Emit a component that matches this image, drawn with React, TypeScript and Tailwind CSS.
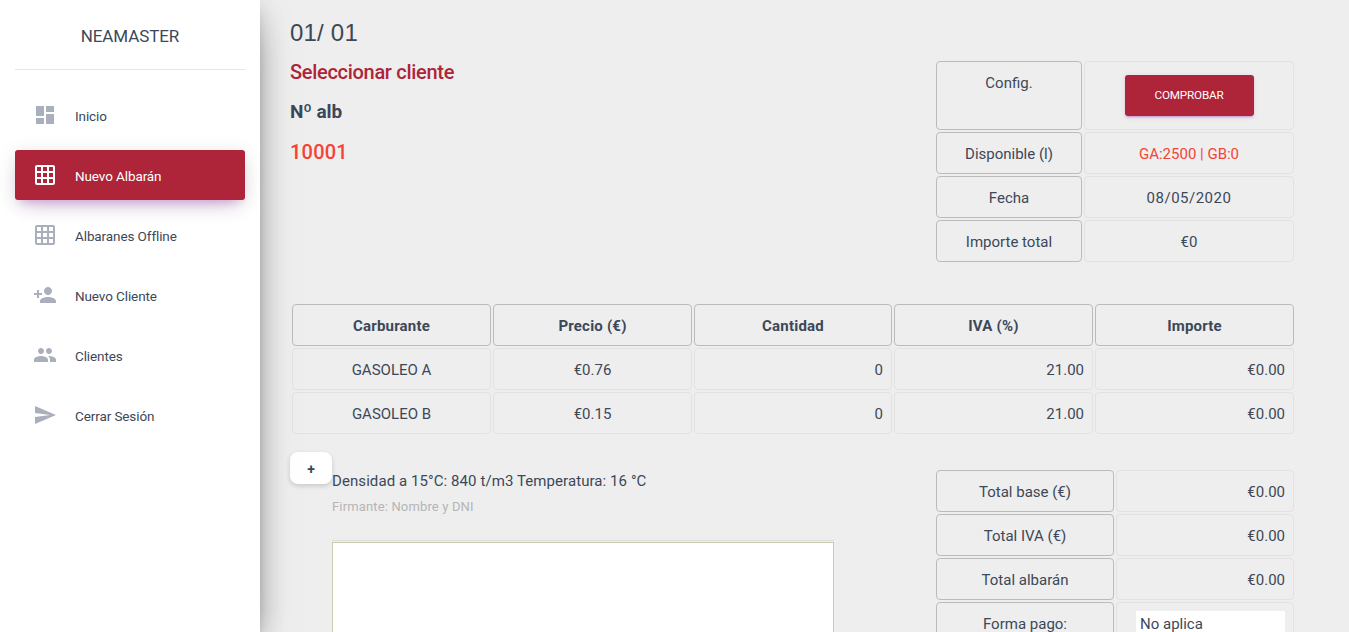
import { MdDashboard, MdGridOn, MdPersonAdd, MdPeople, MdSend } from "react-icons/md";

const font = "font-['Roboto',sans-serif]";

const menu = [
  { label: "Inicio", icon: MdDashboard },
  { label: "Nuevo Albarán", icon: MdGridOn, active: true },
  { label: "Albaranes Offline", icon: MdGridOn },
  { label: "Nuevo Cliente", icon: MdPersonAdd },
  { label: "Clientes", icon: MdPeople },
  { label: "Cerrar Sesión", icon: MdSend },
];

function Cell({
  children,
  head,
  right,
  className = "",
}: {
  children?: React.ReactNode;
  head?: boolean;
  right?: boolean;
  className?: string;
}) {
  return (
    <div
      className={`flex h-[42px] items-center rounded-[4px] border pt-[2px] text-[15px] ${
        head ? "border-[#bbbbbb]" : "border-[#e2e2e2]"
      } ${right ? "justify-end pr-2" : "justify-center"} ${className}`}
    >
      {children}
    </div>
  );
}

function Sidebar() {
  return (
    <aside className="relative z-10 h-full w-[260px] shrink-0 bg-white px-[15px] shadow-[0_16px_38px_-12px_rgba(0,0,0,0.56),0_4px_25px_0_rgba(0,0,0,0.12),0_8px_10px_-5px_rgba(0,0,0,0.2)]">
      <div className="flex h-[70px] items-center justify-center border-b border-[#e5e5e5] pt-[4px] text-[17px] tracking-[-0.1px]">
        NEAMASTER
      </div>
      <nav className="mt-5 flex flex-col gap-[10px]">
        {menu.map((item) => (
          <div
            key={item.label}
            className={`flex h-[50px] items-center rounded-[3px] pl-[18px] text-[13.5px] tracking-[-0.1px] ${
              item.active
                ? "bg-[#ae2438] text-white shadow-[0_12px_20px_-10px_rgba(156,39,176,0.28),0_4px_20px_0_rgba(0,0,0,0.12),0_7px_8px_-5px_rgba(156,39,176,0.2)]"
                : "text-[#3c4858]"
            }`}
          >
            <item.icon className={`mr-[18px] h-6 w-6 ${item.active ? "text-white" : "text-[#a9afbb]"}`} />
            <span className="pt-[2px]">{item.label}</span>
          </div>
        ))}
      </nav>
    </aside>
  );
}

export default function App() {
  return (
    <div className={`flex h-[632px] overflow-hidden bg-[#eeeeee] text-[#3c4858] ${font}`}>
      <Sidebar />
      <main className="min-w-0 flex-1 pl-[30px] pr-[55px] pt-[18px]">
        <div className="flex justify-between">
          <div className="pt-[1px]">
            <div className="font-['Liberation_Sans',sans-serif] text-[24px] leading-[28px] tracking-[0.2px]">01/ 01</div>
            <div className="mt-[11px] text-[20px] font-medium leading-[28px] tracking-[-0.3px] text-[#ae2438]">
              Seleccionar cliente
            </div>
            <div className="mt-[12px] text-[19px] font-bold leading-[28px] tracking-[-0.1px]">Nº alb</div>
            <div className="mt-[12px] text-[20px] font-medium leading-[28px] tracking-[0.2px] text-[#f44336]">10001</div>
          </div>
          <div className="mt-[43px] grid w-[358px] grid-cols-[146px_210px] gap-[2px]">
            <div className="flex h-[69px] justify-center rounded-[4px] border border-[#bbbbbb] pt-[10px] text-[15px]">
              Config.
            </div>
            <div className="flex h-[69px] items-center justify-center rounded-[4px] border border-[#e2e2e2]">
              <button className="flex h-[41px] w-[129px] items-center justify-center rounded-[3px] bg-[#ae2438] text-[11.7px] tracking-[-0.2px] text-white shadow-[0_2px_2px_0_rgba(156,39,176,0.14),0_3px_1px_-2px_rgba(156,39,176,0.2),0_1px_5px_0_rgba(156,39,176,0.12)]">
                COMPROBAR
              </button>
            </div>
            <Cell head>Disponible (l)</Cell>
            <Cell className="text-[#f44336]">GA:2500 | GB:0</Cell>
            <Cell head>Fecha</Cell>
            <Cell className="tracking-[0.5px]">08/05/2020</Cell>
            <Cell head>Importe total</Cell>
            <Cell>€0</Cell>
          </div>
        </div>

        <div className="ml-[2px] mt-[42px] grid grid-cols-[199px_199px_198px_199px_199px] gap-[2px]">
          {["Carburante", "Precio (€)", "Cantidad", "IVA (%)", "Importe"].map((h) => (
            <Cell key={h} head className="font-bold tracking-[0.2px]">
              {h}
            </Cell>
          ))}
          <Cell>GASOLEO A</Cell>
          <Cell>€0.76</Cell>
          <Cell right>0</Cell>
          <Cell right>21.00</Cell>
          <Cell right>€0.00</Cell>
          <Cell>GASOLEO B</Cell>
          <Cell>€0.15</Cell>
          <Cell right>0</Cell>
          <Cell right>21.00</Cell>
          <Cell right>€0.00</Cell>
        </div>

        <div className="mt-[18px] flex items-start justify-between">
          <button className="flex h-[32px] w-[42px] shrink-0 items-center justify-center rounded-[8px] bg-white pt-[2px] text-[14px] font-bold leading-none shadow-[0_2px_5px_rgba(0,0,0,0.16)]">
            +
          </button>
          <div className="mt-[18px] w-[502px] shrink-0">
            <div className="text-[15px] leading-[22px] tracking-[0.08px]">
              Densidad a 15°C: 840 t/m3 Temperatura: 16 °C
            </div>
            <div className="mt-[5px] text-[13px] leading-[20px] tracking-[0.15px] text-[#b5b5b5]">
              Firmante: Nombre y DNI
            </div>
            <div className="mt-[23px] h-px bg-[#dddddd]" />
            <div className="mt-[1px] h-[200px] border border-[#c9cdb0] bg-white" />
          </div>
          <div className="ml-auto mt-[18px] grid w-[358px] grid-cols-[178px_178px] gap-[2px]">
            <Cell head>Total base (€)</Cell>
            <Cell right>€0.00</Cell>
            <Cell head>Total IVA (€)</Cell>
            <Cell right>€0.00</Cell>
            <Cell head>Total albarán</Cell>
            <Cell right>€0.00</Cell>
            <Cell head>Forma pago:</Cell>
            <Cell right>
              <div className="h-[26px] w-[149px] bg-white pl-1 pt-[1px] leading-[24px]">No aplica</div>
            </Cell>
          </div>
        </div>
      </main>
    </div>
  );
}
